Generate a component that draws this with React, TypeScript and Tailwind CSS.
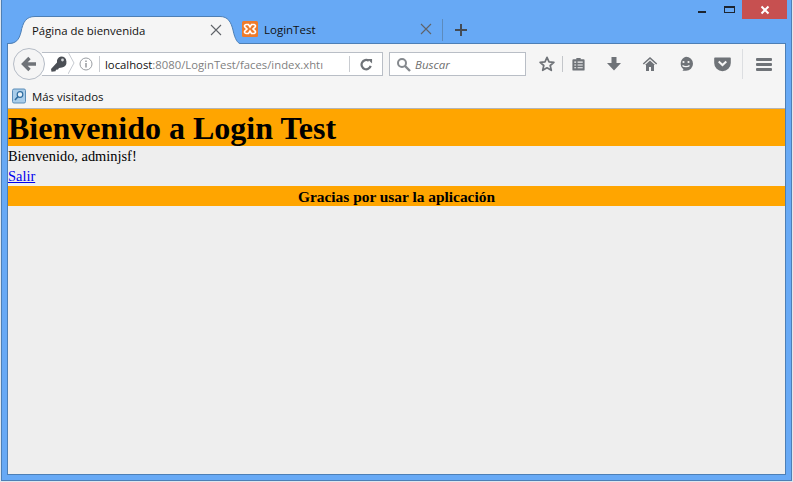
import React from "react";

const gray = "#6f7378";

function CloseX() {
  return (
    <svg width="12" height="12" viewBox="0 0 12 12" className="shrink-0">
      <path d="M1 1L11 11M11 1L1 11" stroke="#5f6368" strokeWidth="1.1" fill="none" />
    </svg>
  );
}

function Xampp() {
  return (
    <svg width="16" height="16" viewBox="0 0 16 16" className="mr-[6px] shrink-0">
      <rect width="16" height="16" rx="1.5" fill="#ee7b2b" />
      <path d="M4 3.5h2.5L8 6l1.5-2.5H12a1.5 1.5 0 0 1 1 2.6L11 8l2 1.9a1.5 1.5 0 0 1-1 2.6H9.5L8 10l-1.5 2.5H4a1.5 1.5 0 0 1-1-2.6L5 8 3 6.1a1.5 1.5 0 0 1 1-2.6z" fill="none" stroke="#fff" strokeWidth="1.6" />
    </svg>
  );
}

export default function App() {
  return (
    <div className="h-[482px] w-[793px] overflow-hidden bg-[#dfe6ee] px-[1px] pb-[1px]">
      <div className="flex h-full flex-col border-x border-b border-[#4d7fb5] bg-[#67a9f5] px-[5px] pb-[5px] [font-family:'Open_Sans','Noto_Sans',sans-serif]">
        {/* Window controls */}
        <div className="flex h-[16px] shrink-0 items-start justify-end">
          <svg width="8" height="2" viewBox="0 0 8 2" className="mr-[18px] mt-[11px]"><rect width="8" height="2" fill="#1d2530" /></svg>
          <svg width="11" height="7" viewBox="0 0 11 7" className="mr-[7px] mt-[6px]"><rect x="0.5" y="0.5" width="10" height="6" fill="none" stroke="#1d2530" /><rect x="0" y="0" width="11" height="2" fill="#1d2530" /></svg>
          <div className="mr-[-1px] flex h-[19px] w-[45px] shrink-0 items-center justify-center bg-[#c75050]">
            <svg width="10" height="10" viewBox="0 0 10 10"><path d="M1.5 1.5L8.5 8.5M8.5 1.5L1.5 8.5" stroke="#fff" strokeWidth="2" /></svg>
          </div>
        </div>
        {/* Tab strip */}
        <div className="flex h-[28px] shrink-0 items-end border-b border-[#4d7fb5] pl-[1px]">
          <div className="relative z-10 mb-[-1px] flex h-[28px] w-[232px] items-center pl-[24px] pr-[18px]">
            <svg width="232" height="28" viewBox="0 0 232 28" className="absolute left-0 top-0">
              <path d="M0 28C8 28 11 24 13 16C15 6 18 .5 27 .5H212C220 .5 223 6 225 14C227 24 230 27 232 28Z" fill="#f5f5f5" />
              <path d="M0 27.5C8 27.5 11 24 13 16C15 6 18 .5 27 .5H212C220 .5 223 6 225 14C227 24 230 27 232 27.5" fill="none" stroke="#4d7fb5" />
            </svg>
            <span className="relative flex-1 pt-[1px] text-[11.4px] leading-none text-[#111]">Página de bienvenida</span>
            <span className="relative flex"><CloseX /></span>
          </div>
          <div className="flex h-[28px] w-[202px] items-center pl-[2px] pr-[10px]">
            <Xampp />
            <span className="flex-1 pt-[1px] text-[11.5px] leading-none text-[#111]">LoginTest</span>
            <CloseX />
          </div>
          <div className="mb-[2px] h-[22px] w-px bg-[#5c8bbd]" />
          <svg width="12" height="12" viewBox="0 0 12 12" className="mb-[7px] ml-[12px]"><path d="M6 0v12M0 6h12" stroke="#444b54" strokeWidth="2" /></svg>
        </div>
        {/* Browser frame */}
        <div className="flex min-h-0 flex-1 flex-col border-x border-b border-[#4d7fb5]">
          {/* Nav bar */}
          <div className="flex h-[40px] shrink-0 items-center bg-[#f5f5f5] pl-[5px]">
            <div className="relative z-10 flex h-[32px] w-[32px] shrink-0 items-center justify-center rounded-full border border-[#b5bcc6] bg-[#f5f5f5]">
              <svg width="16" height="16" viewBox="0 0 16 16"><path d="M8.5 2L2.5 8l6 6M3 8h12" stroke="#6f7378" strokeWidth="3.4" fill="none" /></svg>
            </div>
            <div className="ml-[-3px] flex h-[24px] w-[341px] shrink-0 items-center border border-l-0 border-[#b9bec6] bg-white">
              <svg width="17" height="16" viewBox="0 0 17 16" className="ml-[8px] shrink-0">
                <path d="M11 0.5a5.5 5.5 0 0 1 1 10.9L9 12l-1 1.5-2 .2-.5 1.6-4 .5L1 13l6-6.5A5.5 5.5 0 0 1 11 0.5z" fill="#4b4f55" />
                <circle cx="12.5" cy="4" r="1.4" fill="#d5d7da" />
              </svg>
              <svg width="7" height="24" viewBox="0 0 7 24" className="ml-[1px] shrink-0"><path d="M0 0l6 11-6 11" stroke="#c6cad0" fill="none" /></svg>
              <svg width="14" height="14" viewBox="0 0 14 14" className="ml-[4px] shrink-0">
                <circle cx="7" cy="7" r="6" fill="none" stroke="#9a9ea3" />
                <path d="M7 6v4.5M7 3.5v1.5" stroke="#85898e" strokeWidth="1.3" />
              </svg>
              <div className="ml-[6px] h-[16px] w-px shrink-0 bg-[#c9ccd1]" />
              <span className="ml-[5px] w-[244px] shrink-0 whitespace-nowrap pt-[1px] text-[11.3px] leading-none text-[#7f7f7f]">
                <span className="text-[#111]">localhost</span>:8080/LoginTest/faces/index.xhtı
              </span>
              <div className="h-[16px] w-px shrink-0 bg-[#c9ccd1]" />
              <svg width="13" height="13" viewBox="0 0 14 14" className="ml-[10px] shrink-0">
                <path d="M11.5 8.5A5 5 0 1 1 9.5 3" stroke="#6f7378" strokeWidth="2.4" fill="none" />
                <path d="M8 1h5v5z" fill="#6f7378" />
              </svg>
            </div>
            <div className="ml-[6px] flex h-[24px] w-[137px] shrink-0 items-center border border-[#b9bec6] bg-white pl-[6px]">
              <svg width="15" height="15" viewBox="0 0 15 15" className="shrink-0"><circle cx="6" cy="6" r="4" fill="none" stroke="#85898e" strokeWidth="2" /><path d="M9 9l5 5" stroke="#85898e" strokeWidth="2.4" /></svg>
              <span className="ml-[4px] pt-[1px] text-[11.5px] italic leading-none text-[#6f6f6f]">Buscar</span>
            </div>
            <svg width="16" height="16" viewBox="0 0 16 16" className="ml-[13px] shrink-0">
              <path d="M8 1.3l2 4.5 4.9.5-3.7 3.2 1.1 4.8L8 11.8l-4.3 2.5 1.1-4.8L1.1 6.3 6 5.8z" fill="none" stroke={gray} strokeWidth="1.7" strokeLinejoin="round" />
            </svg>
            <div className="ml-[7px] h-[16px] w-px shrink-0 bg-[#c3c6ca]" />
            <svg width="15" height="16" viewBox="0 0 16 16" className="ml-[8px] shrink-0">
              <path d="M2.5 3h3.2V1.5h4.6V3h3.2a1 1 0 0 1 1 1v10a1 1 0 0 1-1 1h-11a1 1 0 0 1-1-1V4a1 1 0 0 1 1-1z" fill={gray} />
              <path d="M3.5 6h2M7 6h5.5M3.5 9h2M7 9h5.5M3.5 12h2M7 12h5.5" stroke="#f5f5f5" strokeWidth="1.2" />
            </svg>
            <svg width="16" height="16" viewBox="0 0 16 16" className="ml-[20px] shrink-0">
              <path d="M5.5 1h5v6H15l-7 7.5L1 7h4.5z" fill={gray} />
            </svg>
            <svg width="16" height="16" viewBox="0 0 16 16" className="ml-[20px] shrink-0">
              <path d="M8 1L.8 7.6l1 1L8 3l6.2 5.6 1-1z" fill={gray} />
              <path d="M8 4.5L3 9h1v6h3v-4h2v4h3V9h1z" fill={gray} />
            </svg>
            <svg width="16" height="16" viewBox="0 0 16 16" className="ml-[20px] shrink-0">
              <path d="M8 .8a7 7 0 0 1 0 14H4.5l1-1.6A7 7 0 0 1 8 .8z" fill={gray} />
              <circle cx="5.5" cy="6" r="1.1" fill="#f5f5f5" />
              <circle cx="10.5" cy="6" r="1.1" fill="#f5f5f5" />
              <path d="M4.5 9.5c1.5 1.5 5.5 1.5 7 0" stroke="#f5f5f5" strokeWidth="1.3" fill="none" />
            </svg>
            <svg width="17" height="16" viewBox="0 0 17 16" className="ml-[20px] shrink-0">
              <path d="M1 1.5h15a.8.8 0 0 1 .8.8V7a8.3 8.3 0 0 1-16.6 0V2.3a.8.8 0 0 1 .8-.8z" fill={gray} />
              <path d="M4.7 5.5l3.8 3.6 3.8-3.6" stroke="#f5f5f5" strokeWidth="2" fill="none" />
            </svg>
            <div className="ml-[11px] h-[30px] w-px shrink-0 bg-[#dcdee1]" />
            <div className="ml-[13px] flex w-[16px] shrink-0 flex-col gap-[2px]">
              <div className="h-[3px] rounded-[1px] bg-[#6f7378]" />
              <div className="h-[3px] rounded-[1px] bg-[#6f7378]" />
              <div className="h-[3px] rounded-[1px] bg-[#6f7378]" />
            </div>
          </div>
          {/* Bookmarks */}
          <div className="flex h-[25px] shrink-0 items-center border-b border-[#b5b5b5] bg-[#f5f5f5] pl-[4px]">
            <svg width="14" height="16" viewBox="0 0 14 16" className="shrink-0">
              <rect x="0.5" y="1" width="13" height="14" rx="1.5" fill="#a9cdea" stroke="#5b8db8" />
              <circle cx="8" cy="6.5" r="2.8" fill="#e9f3fb" stroke="#2f6c9e" strokeWidth="1.2" />
              <path d="M6 8.5L3 12" stroke="#2f6c9e" strokeWidth="1.6" />
            </svg>
            <span className="ml-[6px] pt-[1px] text-[11.4px] leading-none text-[#111]">Más visitados</span>
          </div>
          {/* Page */}
          <div className="min-h-0 flex-1 bg-[#eeeeee] text-black [font-family:'Liberation_Serif',serif]">
            <div className="flex h-[37px] items-center bg-[#ffa500] text-[32px] font-bold leading-none">Bienvenido a Login Test</div>
            <div className="h-[20px] text-[14.4px] leading-[20px]">Bienvenido, adminjsf!</div>
            <div className="h-[20px] text-[14.4px] leading-[20px]"><a href="#" className="text-[#0000ee] underline">Salir</a></div>
            <div className="h-[20px] bg-[#ffa500] text-center text-[15.4px] font-bold leading-[22px]">Gracias por usar la aplicación</div>
          </div>
        </div>
      </div>
    </div>
  );
}
